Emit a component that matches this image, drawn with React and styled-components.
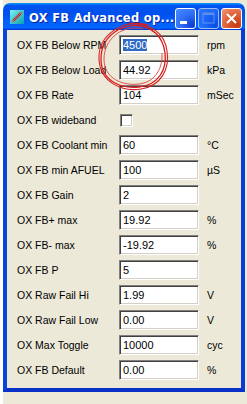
import React from "react";
import styled, { createGlobalStyle } from "styled-components";

const GlobalStyle = createGlobalStyle`
  html, body {
    margin: 0;
    padding: 0;
  }
  body {
    background: linear-gradient(to right, #ffffff 3px, #ece9d8 3px);
    font-family: "Liberation Sans", Arial, sans-serif;
  }
`;

const rows = [
  { label: "OX FB Below RPM", value: "4500", unit: "rpm", selected: true },
  { label: "OX FB Below Load", value: "44.92", unit: "kPa" },
  { label: "OX FB Rate", value: "104", unit: "mSec" },
  { label: "OX FB wideband", check: true },
  { label: "OX FB Coolant min", value: "60", unit: "°C" },
  { label: "OX FB min AFUEL", value: "100", unit: "µS" },
  { label: "OX FB Gain", value: "2" },
  { label: "OX FB+ max", value: "19.92", unit: "%" },
  { label: "OX FB- max", value: "-19.92", unit: "%" },
  { label: "OX FB P", value: "5" },
  { label: "OX Raw Fail Hi", value: "1.99", unit: "V" },
  { label: "OX Raw Fail Low", value: "0.00", unit: "V" },
  { label: "OX Max Toggle", value: "10000", unit: "cyc" },
  { label: "OX FB Default", value: "0.00", unit: "%" },
];

const App = () => {
  return (
    <>
      <GlobalStyle />
      <Page>
        <Window>
          <TitleBar>
            <AppIcon viewBox="0 0 14 14">
              <defs>
                <linearGradient id="ic" x1="0" y1="0" x2="1" y2="1">
                  <stop offset="0" stopColor="#7ff0f0" />
                  <stop offset="1" stopColor="#0a9fb0" />
                </linearGradient>
              </defs>
              <rect x="0" y="0" width="14" height="14" fill="url(#ic)" />
              <path d="M1 11 L11 1 L13 3 L3 13 Z" fill="#8a8a8a" />
              <path d="M3 10 L10 3 M4 11 L11 4" stroke="#c02020" strokeWidth="1" />
            </AppIcon>
            <Title>OX FB Advanced op...</Title>
            <Buttons>
              <TitleButton>
                <svg width="21" height="21" viewBox="0 0 21 21">
                  <rect x="5" y="13" width="7" height="3" fill="#fff" />
                </svg>
              </TitleButton>
              <TitleButton disabled>
                <svg width="21" height="21" viewBox="0 0 21 21">
                  <rect x="5" y="5" width="11" height="10" fill="none" stroke="#9db8f0" strokeWidth="1" />
                  <rect x="5" y="5" width="11" height="2" fill="#9db8f0" />
                </svg>
              </TitleButton>
              <CloseButton>
                <svg width="21" height="21" viewBox="0 0 21 21">
                  <path d="M6 6 L15 15 M15 6 L6 15" stroke="#fff" strokeWidth="2" />
                </svg>
              </CloseButton>
            </Buttons>
          </TitleBar>
          <Frame>
            <Form>
              {rows.map((r) => (
                <React.Fragment key={r.label}>
                  <Label>{r.label}</Label>
                  {r.check ? (
                    <CheckCell>
                      <CheckBox />
                    </CheckCell>
                  ) : (
                    <Field>
                      {r.selected ? <Selected>{r.value}</Selected> : r.value}
                    </Field>
                  )}
                  <Unit>{r.unit || ""}</Unit>
                </React.Fragment>
              ))}
            </Form>
          </Frame>
          <Annotation viewBox="0 0 242 100" width="242" height="100">
            <path
              d="M142 24 C118 18 98 34 98 56 C98 78 118 86 136 84 C156 82 164 66 162 50 C160 34 150 22 128 22"
              fill="none"
              stroke="#d81e1e"
              strokeWidth="1.3"
            />
            <path
              d="M146 22 C120 15 95 32 96 56 C97 80 120 89 138 86 C158 83 167 66 164 48 C162 32 152 21 126 20"
              fill="none"
              stroke="#d81e1e"
              strokeWidth="1.1"
            />
            <path
              d="M140 26 C118 21 101 37 101 56 C101 76 120 83 136 81 C153 79 160 64 159 50"
              fill="none"
              stroke="#e04040"
              strokeWidth="0.9"
            />
          </Annotation>
        </Window>
      </Page>
    </>
  );
};

const Page = styled.div`
  padding: 3px 0 0 3px;
`;

const Window = styled.div`
  position: relative;
  width: 242px;
`;

const TitleBar = styled.div`
  height: 27px;
  display: flex;
  align-items: center;
  padding: 0 5px 0 7px;
  border-radius: 7px 7px 0 0;
  background: linear-gradient(
    to bottom,
    #0997ff 0%,
    #0053ee 10%,
    #0050ee 40%,
    #0066ff 86%,
    #0066ff 92%,
    #005bff 94%,
    #003dd7 96%,
    #003dd7 100%
  );
  box-sizing: border-box;
`;

const AppIcon = styled.svg`
  width: 14px;
  height: 14px;
  flex: none;
  margin-top: 1px;
`;

const Title = styled.div`
  margin-left: 5px;
  flex: 1;
  color: #fff;
  font-family: "DejaVu Sans", sans-serif;
  font-weight: bold;
  font-size: 11.5px;
  letter-spacing: 0.3px;
  white-space: nowrap;
  text-shadow: 1px 1px 0 #0a1fa0;
  margin-top: 2px;
`;

const Buttons = styled.div`
  display: flex;
  gap: 2px;
  margin-top: 3px;
`;

const TitleButton = styled.div`
  width: 21px;
  height: 21px;
  box-sizing: border-box;
  border: 1px solid #fff;
  border-radius: 3px;
  background: radial-gradient(circle at 85% 85%, #0e3fd0 0%, #2d6cf6 45%, #4b8bff 100%);
  opacity: ${(p) => (p.disabled ? 0.6 : 1)};
  display: flex;
  align-items: center;
  justify-content: center;
  svg {
    margin: -1px;
  }
`;

const CloseButton = styled(TitleButton)`
  background: radial-gradient(circle at 80% 85%, #c43a12 0%, #e2643c 55%, #f19a76 100%);
`;

const Frame = styled.div`
  border: 4px solid #0a3ad8;
  border-top: none;
  border-left-color: #0b43dd;
  border-right-color: #0a3ad8;
  border-bottom-color: #0831c8;
  background: #ece9d8;
`;

const Form = styled.div`
  display: grid;
  grid-template-columns: 102px 80px auto;
  grid-auto-rows: 20px;
  row-gap: 5px;
  align-items: center;
  padding: 5px 0 8px 10px;
`;

const Label = styled.div`
  font-size: 10.5px;
  color: #000;
  white-space: nowrap;
`;

const Field = styled.div`
  height: 20px;
  box-sizing: border-box;
  background: #fff;
  border: 1px solid;
  border-color: #808080 #ffffff #ffffff #808080;
  box-shadow: inset 1px 1px 0 #404040, inset -1px -1px 0 #d4d0c8;
  font-size: 11px;
  line-height: 18px;
  padding-left: 3px;
  color: #000;
`;

const Selected = styled.span`
  background: #316ac5;
  color: #fff;
`;

const CheckCell = styled.div`
  display: flex;
  align-items: center;
  padding-left: 1px;
`;

const CheckBox = styled.div`
  width: 13px;
  height: 13px;
  box-sizing: border-box;
  background: #fff;
  border: 1px solid;
  border-color: #808080 #ffffff #ffffff #808080;
  box-shadow: inset 1px 1px 0 #404040, inset -1px -1px 0 #d4d0c8;
`;

const Unit = styled.div`
  font-size: 10.5px;
  color: #000;
  padding-left: 8px;
`;

const Annotation = styled.svg`
  position: absolute;
  left: 0;
  top: 0;
  pointer-events: none;
`;

export default App;
